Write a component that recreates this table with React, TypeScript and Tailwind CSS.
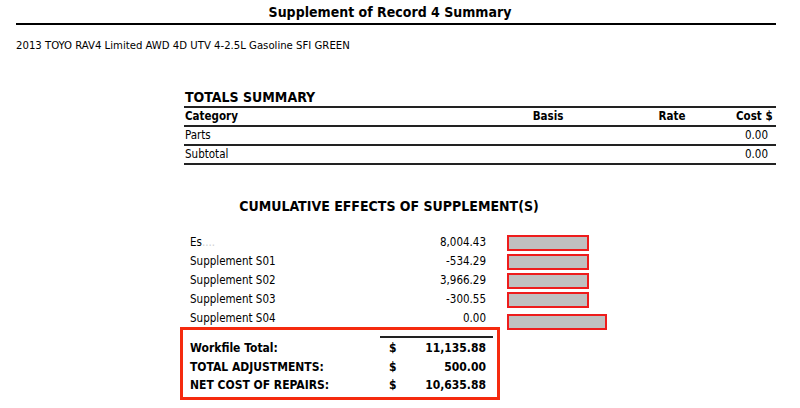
import React from "react";

const supplements = [
  { label: "Es", faded: "....", value: "8,004.43", wide: false },
  { label: "Supplement S01", value: "-534.29", wide: false },
  { label: "Supplement S02", value: "3,966.29", wide: false },
  { label: "Supplement S03", value: "-300.55", wide: false },
  { label: "Supplement S04", value: "0.00", wide: true },
];

const totals = [
  { label: "Workfile Total:", value: "11,135.88" },
  { label: "TOTAL ADJUSTMENTS:", value: "500.00" },
  { label: "NET COST OF REPAIRS:", value: "10,635.88" },
];

export default function App() {
  return (
    <div className="w-[800px] h-[408px] bg-white text-black overflow-hidden font-['DejaVu_Sans_Condensed','DejaVu_Sans',sans-serif]">
      {/* header */}
      <div className="ml-4 mr-6 pt-[2px]">
        <h1 className="text-center text-[14px] leading-[20px] font-bold pr-3">
          Supplement of Record 4 Summary
        </h1>
        <div className="h-[2px] bg-black mt-[1px]" />
        <div className="text-[11.25px] leading-[14px] mt-[14px]">
          2013 TOYO RAV4 Limited AWD 4D UTV 4-2.5L Gasoline SFI GREEN
        </div>
      </div>

      {/* totals summary */}
      <div className="ml-[184px] w-[592px] mt-[36px]">
        <div className="text-[14px] leading-[17px] font-bold pl-[1px]">TOTALS SUMMARY</div>
        <div className="h-[2px] bg-[#222]" />
        <div className="grid grid-cols-[304px_120px_128px_1fr] text-[11.5px] leading-[17px] font-bold border-b-2 border-[#222] whitespace-nowrap">
          <div className="pl-[1px]">Category</div>
          <div className="text-center">Basis</div>
          <div className="text-center">Rate</div>
          <div className="text-right pr-2">Cost $</div>
        </div>
        <div className="grid grid-cols-[1fr_100px] text-[11.5px] leading-[17px] border-b-2 border-[#222]">
          <div className="pl-[1px]">Parts</div>
          <div className="text-right pr-2">0.00</div>
        </div>
        <div className="grid grid-cols-[1fr_100px] text-[11.5px] leading-[17px] border-b-2 border-[#222]">
          <div className="pl-[1px]">Subtotal</div>
          <div className="text-right pr-2">0.00</div>
        </div>
      </div>

      {/* cumulative effects */}
      <div className="w-[778px] text-center text-[14px] leading-[17px] font-bold mt-[33px]">
        CUMULATIVE EFFECTS OF SUPPLEMENT(S)
      </div>

      <div className="ml-[190px] mt-[17px] flex flex-col">
        {supplements.map((s) => (
          <div key={s.label} className="flex items-center h-[19px]">
            <div className="w-[296px] flex justify-between text-[11.5px] leading-[14px]">
              <span>
                {s.label}
                {s.faded && <span className="text-[#d0d0d0]">{s.faded}</span>}
              </span>
              <span>{s.value}</span>
            </div>
            <div
              className={`ml-[21px] h-[16px] bg-[#c0c0c0] border-2 border-[#ee1c1c] ${
                s.wide ? "w-[100px] mt-[9px]" : "w-[82px] mt-[2px]"
              }`}
            />
          </div>
        ))}
      </div>

      {/* red totals box */}
      <div className="ml-[180px] w-[320px] border-[3px] border-[#f52a0f] pt-[6px] pb-[2px] pl-[7px] pr-[11px]">
        <div className="ml-[190px] h-[2px] bg-[#222] mr-[-7px]" />
        <div className="mt-[1px]">
          {totals.map((t) => (
            <div key={t.label} className="flex h-[18.5px] items-center text-[12px] font-bold">
              <span className="w-[199px]">{t.label}</span>
              <span>$</span>
              <span className="flex-1 text-right">{t.value}</span>
            </div>
          ))}
        </div>
      </div>
    </div>
  );
}
